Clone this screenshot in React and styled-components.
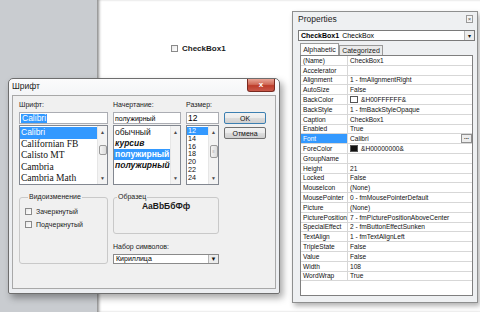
import React from 'react';
import styled, { createGlobalStyle } from 'styled-components';

const GlobalStyle = createGlobalStyle`
  html, body { margin: 0; padding: 0; background: #fff; }
  body { font-family: "Liberation Sans", Arial, sans-serif; color: #000; }
  * { box-sizing: border-box; }
`;

const Desktop = styled.div`
  position: relative;
  display: flex;
  width: 480px;
  height: 312px;
  overflow: hidden;
`;

const Sidebar = styled.div`
  width: 97px;
  flex: none;
  background: #c9ccd0;
`;

const Canvas = styled.div`
  flex: 1;
  background: #fff;
  box-shadow: inset 3px 0 3px -1px rgba(0, 0, 0, 0.45);
  padding: 43px 0 0 74px;
`;

const FormCheck = styled.div`
  display: flex;
  align-items: center;
  gap: 4px;
  height: 10px;
  font-size: 8px;
  font-weight: bold;
  color: #1a1a1a;
`;

const CheckSquare = styled.span`
  width: 7px;
  height: 7px;
  flex: none;
  border: 1px solid #8a8a8a;
  background: linear-gradient(135deg, #e8e8e8, #fff);
`;

/* ---------- Font dialog ---------- */

const FontDialog = styled.div`
  position: absolute;
  left: 8px;
  top: 78px;
  width: 272px;
  height: 216px;
  display: flex;
  flex-direction: column;
  border: 1px solid #6e6e6e;
  border-radius: 5px 5px 2px 2px;
  background: linear-gradient(#fbfbfc, #eef0f3 30px, #eceef1);
  box-shadow: 3px 4px 7px rgba(0, 0, 0, 0.35);
`;

const TitleBar = styled.div`
  height: 16px;
  flex: none;
  display: flex;
  justify-content: space-between;
  align-items: flex-start;
  padding: 0 4px 0 3px;
`;

const TitleText = styled.span`
  font-size: 8.5px;
  line-height: 15px;
  color: #1c1c1c;
`;

const CloseButton = styled.div`
  width: 28px;
  height: 13px;
  display: flex;
  align-items: center;
  justify-content: center;
  border: 1px solid #7a2a20;
  border-top: none;
  border-radius: 0 0 3px 3px;
  background: linear-gradient(#e9a596, #d06a58 45%, #bd3c2a 55%, #c9584a);
  color: #fff;
  font-size: 8px;
  font-weight: bold;
  line-height: 1;
`;

const DialogBody = styled.div`
  flex: 1;
  margin: 0 3px 4px;
  border: 1px solid #a8a8a8;
  background: #f0f0f0;
  padding: 4px 0 0 6px;
`;

const TopSection = styled.div`
  display: grid;
  grid-template-columns: 89px 68px 33px 42px;
  column-gap: 5px;
`;

const Column = styled.div`
  display: flex;
  flex-direction: column;
`;

const FieldLabel = styled.div`
  height: 10px;
  line-height: 10px;
  font-size: 7px;
  color: #222;
  white-space: nowrap;
`;

const TextBox = styled.div`
  margin-top: 2px;
  height: 12px;
  display: flex;
  align-items: center;
  border: 1px solid #abadb3;
  background: #fff;
  padding: 0 1px;
  font-size: ${({ $size }) => $size || 7}px;
  white-space: nowrap;
  overflow: hidden;
`;

const Highlight = styled.span`
  background: #3399ff;
  color: #fff;
  line-height: 9px;
  padding: 0 1px;
`;

const ListBox = styled.div`
  margin-top: 1px;
  height: 60px;
  display: flex;
  border: 1px solid #828790;
  background: #fff;
  overflow: hidden;
`;

const ListItems = styled.div`
  flex: 1;
  min-width: 0;
  padding-top: 1px;
`;

const ListItem = styled.div`
  height: ${({ $h }) => $h}px;
  line-height: ${({ $h }) => $h}px;
  padding-left: 1px;
  font-family: ${({ $serif }) => ($serif ? '"Liberation Serif", "Times New Roman", serif' : '"Liberation Sans", Arial, sans-serif')};
  font-size: ${({ $size }) => $size}px;
  font-weight: ${({ $bold }) => ($bold ? 'bold' : 'normal')};
  font-style: ${({ $italic }) => ($italic ? 'italic' : 'normal')};
  white-space: nowrap;
  overflow: hidden;
  background: ${({ $selected }) => ($selected ? '#3399ff' : 'transparent')};
  color: ${({ $selected }) => ($selected ? '#fff' : '#111')};
`;

const ScrollBar = styled.div`
  width: 10px;
  flex: none;
  display: flex;
  flex-direction: column;
  align-items: center;
  justify-content: space-between;
  background: #f3f3f3;
  border-left: 1px solid #e6e6e6;
  padding: 4px 0 3px;
  font-size: 5px;
  color: #4a4a4a;
  line-height: 5px;
`;

const ScrollThumb = styled.div`
  width: 8px;
  height: ${({ $h }) => $h}px;
  margin-top: ${({ $top }) => $top}px;
  margin-bottom: auto;
  border: 1px solid #9a9a9a;
  border-radius: 2px;
  background: linear-gradient(90deg, #f4f4f4, #dcdcdc);
  display: flex;
  align-items: center;
  justify-content: center;
  font-size: 4px;
  color: #777;
`;

const ButtonColumn = styled.div`
  display: flex;
  flex-direction: column;
  gap: 3px;
  padding-top: 12px;
`;

const DialogButton = styled.div`
  height: 12px;
  display: flex;
  align-items: center;
  justify-content: center;
  border: 1px solid ${({ $default }) => ($default ? '#3c7fb1' : '#707070')};
  border-radius: 2px;
  background: linear-gradient(#f2f2f2, #ebebeb 50%, #dddddd 51%, #cfcfcf);
  font-size: 7px;
  color: #111;
`;

const BottomSection = styled.div`
  display: flex;
  gap: 5px;
  margin-top: 8px;
`;

const GroupBox = styled.fieldset`
  margin: 0;
  width: ${({ $w }) => $w}px;
  height: ${({ $h }) => $h}px;
  padding: ${({ $pad }) => $pad};
  min-inline-size: 0;
  border: 1px solid #c9c9c9;
  border-radius: 3px;
  display: flex;
  flex-direction: column;
  gap: 3px;
`;

const Legend = styled.legend`
  font-size: 7px;
  line-height: 8px;
  padding: 0 1px;
  margin-left: 3px;
  color: #222;
`;

const CheckRow = styled.label`
  display: flex;
  align-items: center;
  gap: 4px;
  height: 10px;
  font-size: 7px;
  color: #222;
`;

const SampleText = styled.div`
  flex: 1;
  display: flex;
  align-items: center;
  justify-content: center;
  padding-bottom: 4px;
  font-size: 8.5px;
  font-weight: bold;
  color: #1a1a1a;
`;

const RightBottom = styled.div`
  width: 106px;
  display: flex;
  flex-direction: column;
`;

const CharsetLabel = styled(FieldLabel)`
  margin-top: 8px;
`;

const ComboBox = styled.div`
  margin-top: 2px;
  height: 10px;
  display: flex;
  border: 1px solid #8a8a8a;
  background: #fff;
  font-size: 7px;
  line-height: 8px;
`;

const ComboText = styled.div`
  flex: 1;
  padding-left: 2px;
`;

const ComboArrow = styled.div`
  width: 10px;
  display: flex;
  align-items: center;
  justify-content: center;
  border-left: 1px solid #b5b5b5;
  background: #ececec;
  font-size: 6px;
  color: #111;
`;

/* ---------- Properties window ---------- */

const PropsWindow = styled.div`
  position: absolute;
  left: 292px;
  top: 11px;
  width: 186px;
  height: 292px;
  display: flex;
  flex-direction: column;
  border: 1px solid #8e8f8f;
  background: #eef0f2;
  padding: 0 2px 6px 5px;
  box-shadow: 2px 3px 5px rgba(0, 0, 0, 0.3);
`;

const PropsTitle = styled.div`
  height: 14px;
  display: flex;
  justify-content: space-between;
  align-items: center;
  font-size: 8.5px;
  color: #1c1c1c;
  padding-right: 2px;
`;

const TinyClose = styled.div`
  width: 7px;
  height: 8px;
  border: 1px solid #9a9a9a;
  background: #f4f4f4;
  font-size: 6px;
  line-height: 6px;
  text-align: center;
  color: #555;
`;

const ObjectSelect = styled.div`
  margin-top: 4px;
  height: 11px;
  display: flex;
  align-items: stretch;
  border: 1px solid #7a7a7a;
  background: #fff;
  font-size: 7px;
`;

const ObjectName = styled.div`
  flex: 1;
  padding-left: 2px;
  line-height: 9px;
  white-space: nowrap;
  b { margin-right: 3px; }
`;

const Tabs = styled.div`
  margin-top: 2px;
  height: 12px;
  display: flex;
  align-items: flex-end;
  padding-left: 2px;
`;

const Tab = styled.div`
  height: ${({ $active }) => ($active ? 12 : 10)}px;
  width: ${({ $w }) => $w}px;
  display: flex;
  align-items: center;
  justify-content: center;
  border: 1px solid #9a9a9a;
  border-bottom: none;
  background: ${({ $active }) => ($active ? '#fcfcfc' : '#eaeaea')};
  font-size: 7px;
  color: #1a1a1a;
`;

const PropGrid = styled.div`
  flex: 1;
  margin: 0 2px;
  border: 1px solid #7f7f7f;
  background: #fff;
  overflow: hidden;
`;

const PropRow = styled.div`
  display: grid;
  grid-template-columns: 47px 1fr;
  height: 9.8px;
`;

const PropCell = styled.div`
  display: flex;
  align-items: center;
  gap: 3px;
  padding-left: 2px;
  border-bottom: 1px solid #d7d7d7;
  border-right: ${({ $name }) => ($name ? '1px solid #d7d7d7' : 'none')};
  font-size: 6.6px;
  white-space: nowrap;
  overflow: hidden;
  background: ${({ $selected }) => ($selected ? '#3399ff' : '#fff')};
  color: ${({ $selected }) => ($selected ? '#fff' : '#111')};
`;

const Swatch = styled.span`
  width: 8px;
  height: 7px;
  flex: none;
  border: 1px solid #555;
  background: ${({ $color }) => $color};
`;

const DotsButton = styled.span`
  margin-left: auto;
  width: 11px;
  height: 9px;
  flex: none;
  border: 1px solid #8f8f8f;
  background: #ececec;
  font-size: 6px;
  font-weight: bold;
  line-height: 5px;
  text-align: center;
  color: #111;
`;

const fonts = [
  { name: 'Calibri', serif: false, size: 8.5, selected: true },
  { name: 'Californian FB', serif: true, size: 9.5 },
  { name: 'Calisto MT', serif: true, size: 9.5 },
  { name: 'Cambria', serif: true, size: 9.5 },
  { name: 'Cambria Math', serif: true, size: 9.5 },
];

const styles = [
  { name: 'обычный' },
  { name: 'курсив', italic: true, bold: true },
  { name: 'полужирный', bold: true, selected: true },
  { name: 'полужирный к', bold: true, italic: true },
];

const sizes = ['12', '14', '16', '18', '20', '22', '24'];

const props = [
  ['(Name)', 'CheckBox1'],
  ['Accelerator', ''],
  ['Alignment', '1 - fmAlignmentRight'],
  ['AutoSize', 'False'],
  ['BackColor', '&H00FFFFFF&', '#ffffff'],
  ['BackStyle', '1 - fmBackStyleOpaque'],
  ['Caption', 'CheckBox1'],
  ['Enabled', 'True'],
  ['Font', 'Calibri'],
  ['ForeColor', '&H00000000&', '#111111'],
  ['GroupName', ''],
  ['Height', '21'],
  ['Locked', 'False'],
  ['MouseIcon', '(None)'],
  ['MousePointer', '0 - fmMousePointerDefault'],
  ['Picture', '(None)'],
  ['PicturePosition', '7 - fmPicturePositionAboveCenter'],
  ['SpecialEffect', '2 - fmButtonEffectSunken'],
  ['TextAlign', '1 - fmTextAlignLeft'],
  ['TripleState', 'False'],
  ['Value', 'False'],
  ['Width', '108'],
  ['WordWrap', 'True'],
];

const App = () => (
  <>
    <GlobalStyle />
    <Desktop>
      <Sidebar />
      <Canvas>
        <FormCheck>
          <CheckSquare />
          CheckBox1
        </FormCheck>
      </Canvas>

      <FontDialog>
        <TitleBar>
          <TitleText>Шрифт</TitleText>
          <CloseButton>x</CloseButton>
        </TitleBar>
        <DialogBody>
          <TopSection>
            <Column>
              <FieldLabel>Шрифт:</FieldLabel>
              <TextBox $size={8.5}>
                <Highlight>Calibri</Highlight>
              </TextBox>
              <ListBox>
                <ListItems>
                  {fonts.map((f) => (
                    <ListItem key={f.name} $h={11.6} $size={f.size} $serif={f.serif} $selected={f.selected}>
                      {f.name}
                    </ListItem>
                  ))}
                </ListItems>
                <ScrollBar>
                  <span>▲</span>
                  <ScrollThumb $h={10} $top={10} />
                  <span>▼</span>
                </ScrollBar>
              </ListBox>
            </Column>

            <Column>
              <FieldLabel>Начертание:</FieldLabel>
              <TextBox>полужирный</TextBox>
              <ListBox>
                <ListItems>
                  {styles.map((s) => (
                    <ListItem
                      key={s.name}
                      $h={11}
                      $size={8.5}
                      $bold={s.bold}
                      $italic={s.italic}
                      $selected={s.selected}
                    >
                      {s.name}
                    </ListItem>
                  ))}
                </ListItems>
                <ScrollBar>
                  <span>▲</span>
                  <span>▼</span>
                </ScrollBar>
              </ListBox>
            </Column>

            <Column>
              <FieldLabel>Размер:</FieldLabel>
              <TextBox $size={8.5}>12</TextBox>
              <ListBox>
                <ListItems>
                  {sizes.map((s, i) => (
                    <ListItem key={s} $h={7.8} $size={7.2} $selected={i === 0}>
                      {s}
                    </ListItem>
                  ))}
                </ListItems>
                <ScrollBar>
                  <span>▲</span>
                  <ScrollThumb $h={13} $top={10}>≡</ScrollThumb>
                  <span>▼</span>
                </ScrollBar>
              </ListBox>
            </Column>

            <ButtonColumn>
              <DialogButton $default>OK</DialogButton>
              <DialogButton>Отмена</DialogButton>
            </ButtonColumn>
          </TopSection>

          <BottomSection>
            <GroupBox $w={89} $h={71} $pad="5px 0 0 5px">
              <Legend>Видоизменение</Legend>
              <CheckRow>
                <CheckSquare />
                Зачеркнутый
              </CheckRow>
              <CheckRow>
                <CheckSquare />
                Подчеркнутый
              </CheckRow>
            </GroupBox>

            <RightBottom>
              <GroupBox $w={106} $h={41} $pad="0">
                <Legend>Образец</Legend>
                <SampleText>AaBbБбФф</SampleText>
              </GroupBox>
              <CharsetLabel>Набор символов:</CharsetLabel>
              <ComboBox>
                <ComboText>Кириллица</ComboText>
                <ComboArrow>▼</ComboArrow>
              </ComboBox>
            </RightBottom>
          </BottomSection>
        </DialogBody>
      </FontDialog>

      <PropsWindow>
        <PropsTitle>
          Properties
          <TinyClose>×</TinyClose>
        </PropsTitle>
        <ObjectSelect>
          <ObjectName>
            <b>CheckBox1</b>CheckBox
          </ObjectName>
          <ComboArrow>▾</ComboArrow>
        </ObjectSelect>
        <Tabs>
          <Tab $active $w={39}>Alphabetic</Tab>
          <Tab $w={44}>Categorized</Tab>
        </Tabs>
        <PropGrid>
          {props.map(([name, value, swatch]) => (
            <PropRow key={name}>
              <PropCell $name $selected={name === 'Font'}>{name}</PropCell>
              <PropCell>
                {swatch && <Swatch $color={swatch} />}
                {value}
                {name === 'Font' && <DotsButton>...</DotsButton>}
              </PropCell>
            </PropRow>
          ))}
        </PropGrid>
      </PropsWindow>
    </Desktop>
  </>
);

export default App;
